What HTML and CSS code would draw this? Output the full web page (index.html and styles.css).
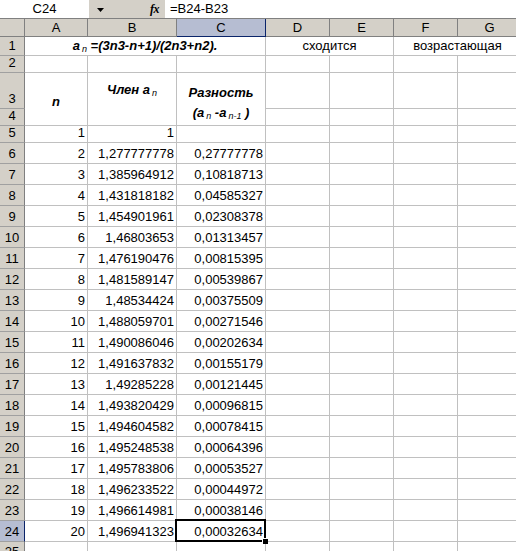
FILE: index.html
```html
<!DOCTYPE html>
<html>
<head>
<meta charset="utf-8">
<link rel="stylesheet" href="styles.css">
</head>
<body>
<div class="fbar">
  <div class="namebox">C24</div>
  <div class="dropbtn"><svg width="7" height="4" viewBox="0 0 7 4"><path d="M0 0H7L3.5 4Z" fill="#000"/></svg></div>
  <div class="fxgap"></div>
  <div class="fx">fx</div>
  <div class="formula">=B24-B23</div>
</div>
<div class="sheet">
  <div class="h corner"></div>
  <div class="h">A</div>
  <div class="h">B</div>
  <div class="h hsel">C</div>
  <div class="h">D</div>
  <div class="h">E</div>
  <div class="h">F</div>
  <div class="h">G</div>

  <div class="rh">1</div>
  <div class="c title span3"><span class="bi">a<sub class="sub">n</sub> =(3n3-n+1)/(2n3+n2).</span></div>
  <div class="c ctr span2">сходится</div>
  <div class="c ctr span2">возрастающая</div>

  <div class="rh">2</div>
  <div class="c"></div><div class="c"></div><div class="c"></div><div class="c"></div><div class="c"></div><div class="c"></div><div class="c"></div>

  <div class="rh">3</div>
  <div class="c hd rows2 hd-n"><span class="line bi">n</span></div>
  <div class="c hd rows2 hd-a"><span class="line bi">Член a<sub class="sub">n</sub></span></div>
  <div class="c hd rows2 hd-d"><span class="line bi">Разность</span><span class="line line2 bi">(a<sub class="sub">n</sub> -a<sub class="sub">n-1</sub> )</span></div>
  <div class="c"></div><div class="c"></div><div class="c"></div><div class="c"></div>

  <div class="rh">4</div>
  <div class="c"></div><div class="c"></div><div class="c"></div><div class="c"></div>

  <div class="rh">5</div>
  <div class="c r">1</div><div class="c r">1</div><div class="c"></div><div class="c"></div><div class="c"></div><div class="c"></div><div class="c"></div>

  <div class="rh">6</div>
  <div class="c r">2</div><div class="c r">1,277777778</div><div class="c r">0,27777778</div><div class="c"></div><div class="c"></div><div class="c"></div><div class="c"></div>
  <div class="rh">7</div>
  <div class="c r">3</div><div class="c r">1,385964912</div><div class="c r">0,10818713</div><div class="c"></div><div class="c"></div><div class="c"></div><div class="c"></div>
  <div class="rh">8</div>
  <div class="c r">4</div><div class="c r">1,431818182</div><div class="c r">0,04585327</div><div class="c"></div><div class="c"></div><div class="c"></div><div class="c"></div>
  <div class="rh">9</div>
  <div class="c r">5</div><div class="c r">1,454901961</div><div class="c r">0,02308378</div><div class="c"></div><div class="c"></div><div class="c"></div><div class="c"></div>
  <div class="rh">10</div>
  <div class="c r">6</div><div class="c r">1,46803653</div><div class="c r">0,01313457</div><div class="c"></div><div class="c"></div><div class="c"></div><div class="c"></div>
  <div class="rh">11</div>
  <div class="c r">7</div><div class="c r">1,476190476</div><div class="c r">0,00815395</div><div class="c"></div><div class="c"></div><div class="c"></div><div class="c"></div>
  <div class="rh">12</div>
  <div class="c r">8</div><div class="c r">1,481589147</div><div class="c r">0,00539867</div><div class="c"></div><div class="c"></div><div class="c"></div><div class="c"></div>
  <div class="rh">13</div>
  <div class="c r">9</div><div class="c r">1,48534424</div><div class="c r">0,00375509</div><div class="c"></div><div class="c"></div><div class="c"></div><div class="c"></div>
  <div class="rh">14</div>
  <div class="c r">10</div><div class="c r">1,488059701</div><div class="c r">0,00271546</div><div class="c"></div><div class="c"></div><div class="c"></div><div class="c"></div>
  <div class="rh">15</div>
  <div class="c r">11</div><div class="c r">1,490086046</div><div class="c r">0,00202634</div><div class="c"></div><div class="c"></div><div class="c"></div><div class="c"></div>
  <div class="rh">16</div>
  <div class="c r">12</div><div class="c r">1,491637832</div><div class="c r">0,00155179</div><div class="c"></div><div class="c"></div><div class="c"></div><div class="c"></div>
  <div class="rh">17</div>
  <div class="c r">13</div><div class="c r">1,49285228</div><div class="c r">0,00121445</div><div class="c"></div><div class="c"></div><div class="c"></div><div class="c"></div>
  <div class="rh">18</div>
  <div class="c r">14</div><div class="c r">1,493820429</div><div class="c r">0,00096815</div><div class="c"></div><div class="c"></div><div class="c"></div><div class="c"></div>
  <div class="rh">19</div>
  <div class="c r">15</div><div class="c r">1,494604582</div><div class="c r">0,00078415</div><div class="c"></div><div class="c"></div><div class="c"></div><div class="c"></div>
  <div class="rh">20</div>
  <div class="c r">16</div><div class="c r">1,495248538</div><div class="c r">0,00064396</div><div class="c"></div><div class="c"></div><div class="c"></div><div class="c"></div>
  <div class="rh">21</div>
  <div class="c r">17</div><div class="c r">1,495783806</div><div class="c r">0,00053527</div><div class="c"></div><div class="c"></div><div class="c"></div><div class="c"></div>
  <div class="rh">22</div>
  <div class="c r">18</div><div class="c r">1,496233522</div><div class="c r">0,00044972</div><div class="c"></div><div class="c"></div><div class="c"></div><div class="c"></div>
  <div class="rh">23</div>
  <div class="c r">19</div><div class="c r">1,496614981</div><div class="c r">0,00038146</div><div class="c"></div><div class="c"></div><div class="c"></div><div class="c"></div>
  <div class="rh rhsel">24</div>
  <div class="c r">20</div><div class="c r">1,496941323</div><div class="c r sel">0,00032634</div><div class="c"></div><div class="c"></div><div class="c"></div><div class="c"></div>
  <div class="rh rh-last">25</div>
  <div class="c"></div><div class="c"></div><div class="c"></div><div class="c"></div><div class="c"></div><div class="c"></div><div class="c"></div>
</div>
</body>
</html>
```
FILE: styles.css
```css
html, body {
  margin: 0;
  padding: 0;
  background: #fff;
}
body {
  width: 516px;
  height: 551px;
  overflow: hidden;
  font-family: "Liberation Sans", Arial, sans-serif;
  font-size: 13px;
  color: #000;
}

/* formula bar */
.fbar {
  display: flex;
  height: 19px;
  box-sizing: border-box;
  background: #d4d0c8;
  border-bottom: 1px solid #808080;
}
.namebox {
  width: 89px;
  background: #fff;
  text-align: center;
  line-height: 18px;
}
.dropbtn {
  width: 22px;
  display: flex;
  align-items: center;
  justify-content: center;
  padding-top: 1px;
  box-sizing: border-box;
}
.fxgap {
  width: 39px;
}
.fx {
  width: 15px;
  font-family: "Liberation Serif", "Times New Roman", serif;
  font-style: italic;
  font-weight: bold;
  font-size: 12px;
  line-height: 18px;
  letter-spacing: -0.5px;
}
.formula {
  flex: 1;
  background: #fff;
  line-height: 18px;
  padding-left: 5px;
}

/* sheet grid */
.sheet {
  display: grid;
  grid-template-columns: 25px 63px 89px 89px 64px 64px 64px 64px;
  grid-template-rows: 18px 19px 17px 36px 17px 17px repeat(19, 21px) 30px;
}
.h {
  background: #d4d0c8;
  border-right: 1px solid #808080;
  border-bottom: 1px solid #808080;
  box-sizing: border-box;
  display: flex;
  align-items: center;
  justify-content: center;
  line-height: 16px;
}
.hsel {
  background: #b6bdd2;
  border-right-color: #0a246a;
  border-bottom-color: #0a246a;
}
.rh {
  background: #d4d0c8;
  border-right: 1px solid #808080;
  border-bottom: 1px solid #a0a0a0;
  box-sizing: border-box;
  display: flex;
  align-items: flex-end;
  justify-content: center;
  line-height: 16px;
  padding-bottom: 1px;
}
.rh-last {
  align-items: flex-start;
  padding-top: 2px;
}
.rhsel {
  background: #b6bdd2;
  border-right-color: #0a246a;
}
.c {
  border-right: 1px solid #c0c0c0;
  border-bottom: 1px solid #c0c0c0;
  box-sizing: border-box;
  display: flex;
  align-items: flex-end;
  padding: 0 2px 1px 2px;
  line-height: 16px;
  white-space: nowrap;
  min-width: 0;
}
.r {
  justify-content: flex-end;
}
.ctr {
  justify-content: center;
}
.span3 {
  grid-column: span 3;
  justify-content: center;
}
.span2 {
  grid-column: span 2;
}
.rows2 {
  grid-row: span 2;
}
.bi {
  font-weight: bold;
  font-style: italic;
}
.sub {
  font-size: 9px;
  font-weight: normal;
  font-style: italic;
  vertical-align: -2px;
  line-height: 0;
  margin-left: 2px;
}

/* header block rows 3-4 */
.hd {
  flex-direction: column;
  align-items: center;
  justify-content: flex-start;
}
.hd-n {
  padding-top: 20px;
}
.hd-a {
  padding-top: 8px;
}
.hd-d {
  padding-top: 11px;
}
.line {
  display: block;
  line-height: 18px;
}
.line2 {
  margin-top: 2px;
}

/* selected cell */
.sel {
  position: relative;
}
.sel::after {
  content: "";
  position: absolute;
  left: -2px;
  top: -2px;
  right: -1px;
  bottom: -1px;
  border: 2px solid #000;
}
.sel::before {
  content: "";
  position: absolute;
  right: -3px;
  bottom: -3px;
  width: 5px;
  height: 5px;
  background: #000;
  border-left: 1px solid #fff;
  border-top: 1px solid #fff;
  z-index: 2;
}
```
